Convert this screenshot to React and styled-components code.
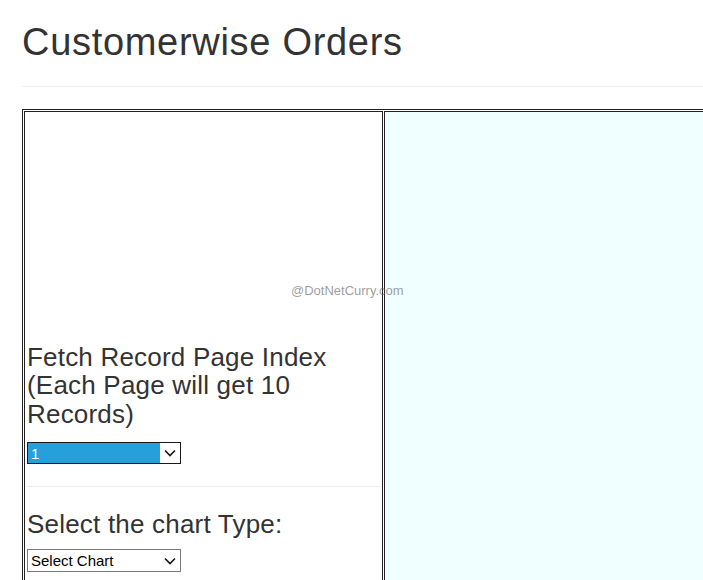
import React from 'react';
import styled, { createGlobalStyle } from 'styled-components';

const GlobalStyle = createGlobalStyle`
  html, body {
    margin: 0;
    padding: 0;
    overflow: hidden;
    background: #fff;
  }
  body {
    font-family: "Liberation Sans", Arial, Helvetica, sans-serif;
    color: #333;
  }
`;

const Page = styled.div`
  position: relative;
  padding: 22px 0 0 22px;
  width: 1200px;
`;

const PageHeader = styled.div`
  padding-bottom: 22px;
  border-bottom: 1px solid #eee;
`;

const Title = styled.h1`
  margin: 0;
  font-size: 38px;
  font-weight: 400;
  letter-spacing: 0.7px;
  line-height: 1.1;
  color: #333;
`;

const LayoutTable = styled.table`
  margin-top: 22px;
  border: 1px solid #222;
  border-spacing: 1px;
  width: 1000px;
`;

const Cell = styled.td`
  border: 1px solid #222;
  vertical-align: top;
  padding: 0 2px 20px;
`;

const ControlsCell = styled(Cell)`
  width: 353px;
`;

const ChartCell = styled(Cell)`
  background: #f0ffff;
`;

const ChartHolder = styled.div`
  height: 211px;
`;

const Label = styled.h3`
  margin: ${(p) => p.$gap}px 0 0;
  font-size: 26px;
  font-weight: 400;
  letter-spacing: 0.2px;
  line-height: 28.4px;
  color: #333;
`;

const Divider = styled.hr`
  margin: 22px 0 0;
  border: 0;
  border-top: 1px solid #eee;
`;

const FakeSelect = styled.div`
  display: flex;
  width: 154px;
  height: ${(p) => (p.$focused ? 22 : 23)}px;
  margin-top: ${(p) => p.$gap}px;
  box-sizing: border-box;
  border: 1px solid ${(p) => (p.$focused ? '#1a1a1a' : '#7a7a7a')};
  background: #fff;
  font-family: "Liberation Sans", Arial, sans-serif;
  font-size: 15px;
  color: #000;
`;

const SelectValue = styled.div`
  flex: 1;
  display: flex;
  align-items: center;
  padding-left: 3px;
  background: ${(p) => (p.$highlight ? '#26a0da' : 'transparent')};
  color: ${(p) => (p.$highlight ? '#fff' : '#000')};
  white-space: nowrap;
`;

const Arrow = styled.div`
  width: 20px;
  display: flex;
  align-items: center;
  justify-content: center;
`;

const Watermark = styled.div`
  position: absolute;
  left: 291px;
  top: 283px;
  font-size: 13px;
  color: rgba(90, 90, 90, 0.6);
  white-space: nowrap;
`;

const Chevron = () => (
  <svg width="12" height="8" viewBox="0 0 12 8">
    <polyline points="1,1.5 6,6.5 11,1.5" fill="none" stroke="#1a1a1a" strokeWidth="1.7" />
  </svg>
);

const Select = ({ value, focused, gap }) => (
  <FakeSelect $focused={focused} $gap={gap}>
    <SelectValue $highlight={focused}>{value}</SelectValue>
    <Arrow>
      <Chevron />
    </Arrow>
  </FakeSelect>
);

export default function App() {
  return (
    <>
      <GlobalStyle />
      <Page>
        <PageHeader>
          <Title>Customerwise Orders</Title>
        </PageHeader>
        <LayoutTable>
          <tbody>
            <tr>
              <ControlsCell>
                <ChartHolder />
                <Label $gap={20}>Fetch Record Page Index (Each Page will get 10 Records)</Label>
                <Select value="1" focused gap={14} />
                <Divider />
                <Label $gap={23}>Select the chart Type:</Label>
                <Select value="Select Chart" gap={11} />
              </ControlsCell>
              <ChartCell />
            </tr>
          </tbody>
        </LayoutTable>
        <Watermark>@DotNetCurry.com</Watermark>
      </Page>
    </>
  );
}
